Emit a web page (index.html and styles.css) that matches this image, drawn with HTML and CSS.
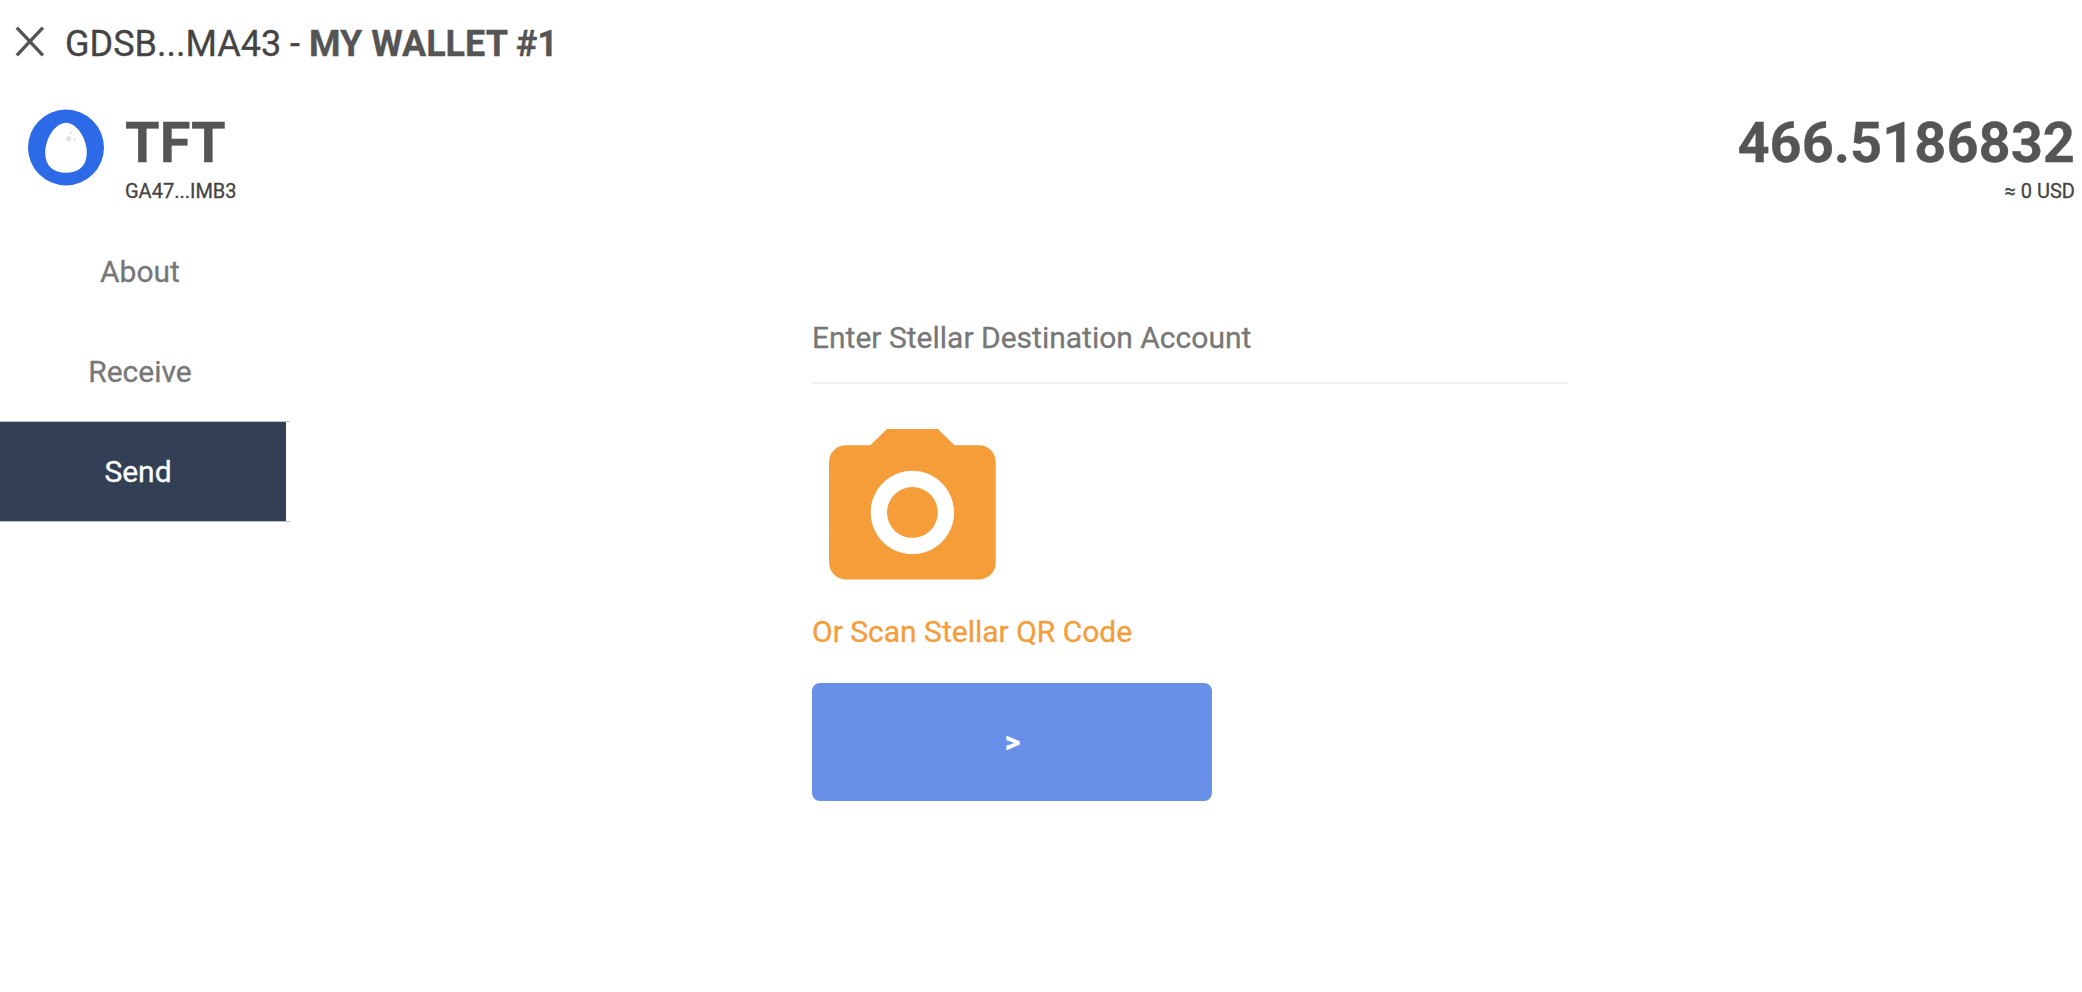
FILE: index.html
```html
<!DOCTYPE html>
<html lang="en">
<head>
<meta charset="utf-8">
<title>Wallet</title>
<link rel="stylesheet" href="styles.css">
</head>
<body>
<header class="topbar">
  <svg class="close" viewBox="0 0 32 34" aria-label="Close"><path d="M2.8 2.6 28.9 30.4M28.9 2.6 2.8 30.4"/></svg>
  <h1 class="title"><span class="address">GDSB...MA43 -</span> <strong class="name">MY WALLET #1</strong></h1>
</header>
<section class="asset">
  <svg class="logo" viewBox="0 0 76 76">
    <circle cx="38" cy="38" r="38" fill="#2d6ae8"/>
    <path d="M38 13.3C48 13.3 58.8 28 58.8 43.5C58.8 56.5 50.5 63.2 38 63.2S17.2 56.5 17.2 43.5C17.2 28 28 13.3 38 13.3Z" fill="#fff"/>
    <circle cx="40.6" cy="29" r="2.6" fill="#e3e3e3"/>
    <circle cx="42.8" cy="23" r="1.3" fill="#e3e3e3"/>
    <circle cx="46.4" cy="30.2" r="1.4" fill="#e3e3e3"/>
  </svg>
  <div class="asset-text">
    <div class="big">TFT</div>
    <div class="small">GA47...IMB3</div>
  </div>
  <div class="asset-text balance">
    <div class="big amount">466.5186832</div>
    <div class="small">≈ 0 USD</div>
  </div>
</section>
<main class="content">
  <nav class="tabs">
    <a class="tab">About</a>
    <a class="tab">Receive</a>
    <div class="active-row"><a class="tab active">Send</a></div>
  </nav>
  <form class="send">
    <div class="field">Enter Stellar Destination Account</div>
    <svg class="camera" viewBox="-.05 -.05 24 24" fill="#f49d39"><circle cx="12" cy="12" r="3.05"/><path d="M8.95 2 6.95 3.95H4c-1.1 0-2 .9-2 2v12.1c0 1.1.9 2 2 2h16c1.1 0 2-.9 2-2V5.95c0-1.1-.9-2-2-2h-2.95L15.05 2H8.95zM12 17c-2.76 0-5-2.24-5-5s2.24-5 5-5 5 2.24 5 5-2.24 5-5 5z"/></svg>
    <div class="scan">Or Scan Stellar QR Code</div>
    <button class="next" type="button">&gt;</button>
  </form>
</main>
</body>
</html>
```
FILE: styles.css
```css
* { box-sizing: border-box; }
body {
  margin: 0;
  background: #fff;
  color: #444;
  font-family: Roboto, "Liberation Sans", sans-serif;
  font-size: 30px;
  -webkit-text-stroke: 0.3px currentColor;
}
.topbar {
  display: flex;
  align-items: flex-start;
  height: 109px;
  padding: 20px 0 0 14px;
}
.close {
  width: 32px;
  height: 34px;
  margin-top: 5px;
  fill: none;
  stroke: #555;
  stroke-width: 3.4;
}
.title {
  margin: 0 0 0 19px;
  font-size: 36px;
  font-weight: 400;
  line-height: 48px;
  white-space: nowrap;
}
.name { font-weight: 700; color: #555; }
.asset {
  display: flex;
  height: 113px;
  padding: 0 7px 0 28px;
}
.logo { width: 76px; height: 77px; }
.asset-text { margin-left: 21px; }
.balance { margin-left: auto; text-align: right; }
.big {
  padding-top: 1px;
  color: #555;
  font-size: 56px;
  font-weight: 700;
  line-height: 66px;
}
.small {
  font-size: 20px;
  line-height: 24px;
  margin-top: 3px;
}
.content { display: flex; }
.tabs { width: 290px; }
.tab {
  display: flex;
  align-items: center;
  justify-content: center;
  height: 100px;
  padding: 0 10px 2px 0;
  color: #777;
}
.active-row {
  height: 101px;
  margin-top: -1px;
  border-top: 1px solid #bcc1c9;
  border-bottom: 1px solid #bcc1c9;
}
.tab.active {
  width: 286px;
  height: 99px;
  padding-bottom: 0;
  color: #fff;
  background: #323f55;
}
.send {
  display: flex;
  flex-direction: column;
  width: 756px;
  margin-left: 522px;
  padding-top: 72px;
}
.field {
  height: 90px;
  padding-top: 26px;
  border-bottom: 2px solid #efeff5;
  color: #777;
  line-height: 36px;
}
.camera { width: 200px; height: 200px; margin-top: 28px; }
.scan { margin-top: 2px; color: #f49d39; line-height: 36px; }
.next {
  width: 400px;
  height: 118px;
  margin-top: 33px;
  padding: 0 0 2px 1px;
  border: 0;
  border-radius: 8px;
  background: #6990e9;
  color: #fff;
  font: 700 30px Roboto, sans-serif;
}
```
